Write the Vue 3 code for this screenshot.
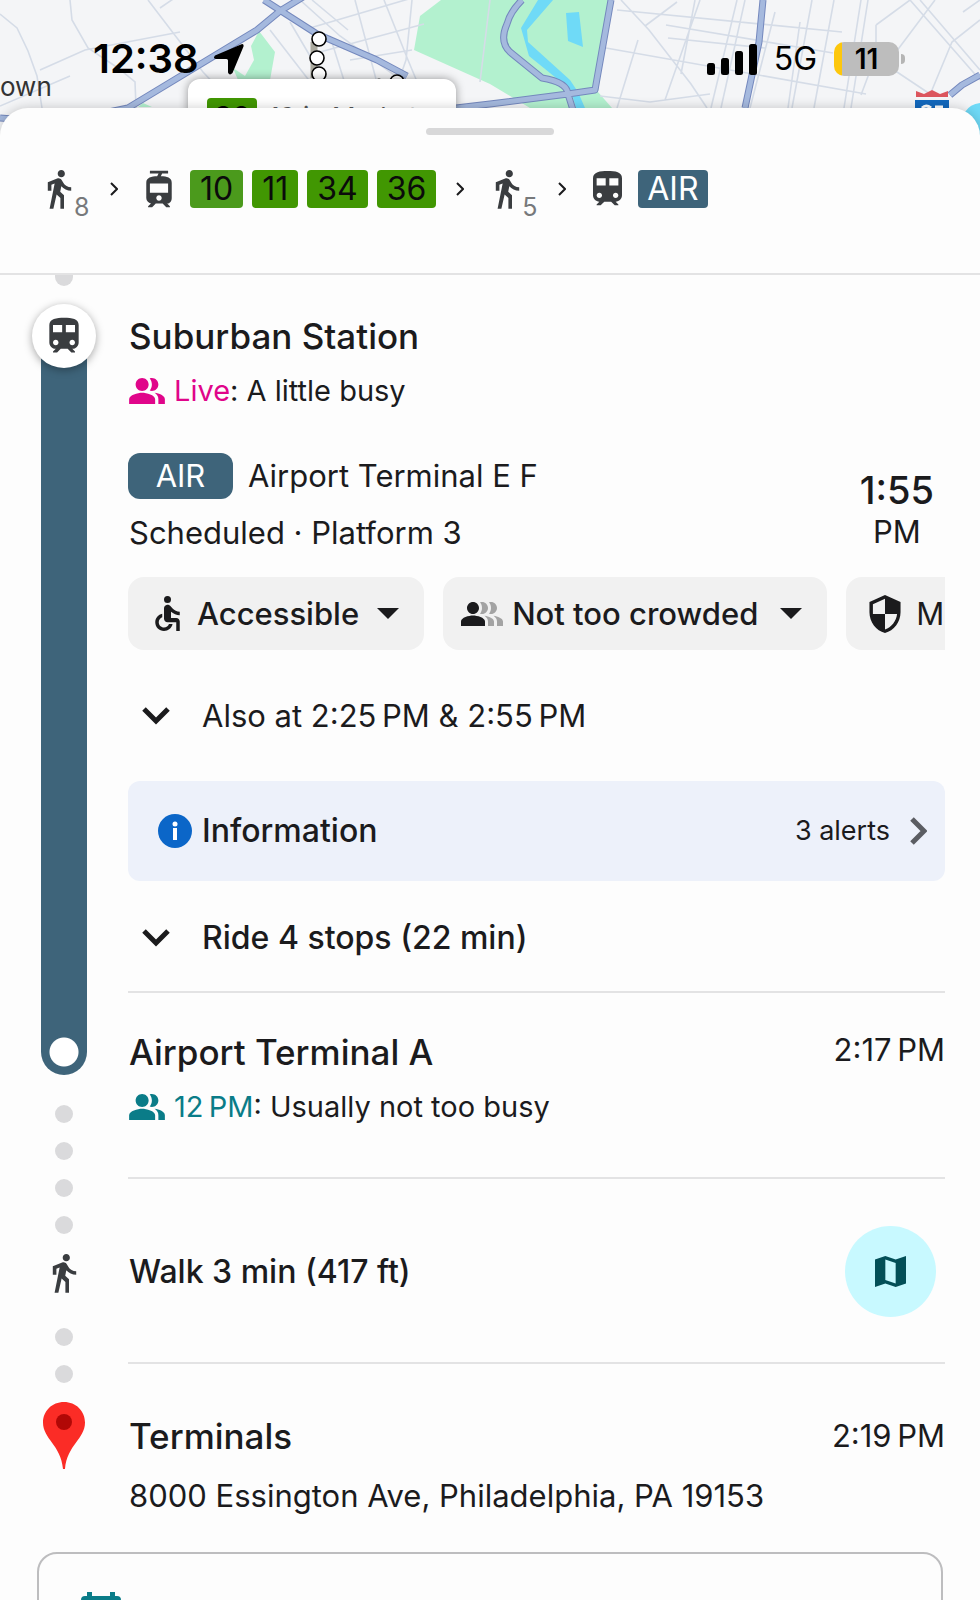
<script setup>
import { ref } from 'vue'

const paths = {
  walk: 'M13.5 5.5c1.1 0 2-.9 2-2s-.9-2-2-2-2 .9-2 2 .9 2 2 2zM9.8 8.9L7 23h2.1l1.8-8 2.1 2v6h2v-7.5l-2.1-2 .6-3C14.8 12 16.8 13 19 13v-2c-1.9 0-3.5-1-4.3-2.4l-1-1.6c-.4-.6-1-1-1.7-1-.3 0-.5.1-.8.1L6 8.3V13h2V9.6l1.8-.7z',
  train: 'M12 2c-4 0-8 .5-8 4v9.5C4 17.43 5.57 19 7.5 19L6 20.5v.5h2.23l2-2H14l2 2h2v-.5L16.5 19c1.93 0 3.5-1.57 3.5-3.5V6c0-3.5-3.58-4-8-4zM7.5 17c-.83 0-1.5-.67-1.5-1.5S6.67 14 7.5 14s1.5.67 1.5 1.5S8.33 17 7.5 17zm3.5-7H6V6h5v4zm2 0V6h5v4h-5zm3.5 7c-.83 0-1.5-.67-1.5-1.5s.67-1.5 1.5-1.5 1.5.67 1.5 1.5-.67 1.5-1.5 1.5z',
  tram: 'M19 16.94V8.5c0-2.79-2.61-3.4-6.01-3.49l.76-1.51H17V2H7v1.5h4.75l-.76 1.52C7.86 5.11 5 5.73 5 8.5v8.44c0 1.45 1.19 2.66 2.59 2.97L6 21.5v.5h2.23l2-2H14l2 2h2v-.5L16.5 20h-.08c1.69 0 2.58-1.37 2.58-3.06zm-7 1.56c-.83 0-1.5-.67-1.5-1.5s.67-1.5 1.5-1.5 1.5.67 1.5 1.5-.67 1.5-1.5 1.5zm5-4.5H7V9h10v5z',
  person: 'M9 12c2.21 0 4-1.79 4-4s-1.79-4-4-4-4 1.79-4 4 1.79 4 4 4zm0 1c-2.67 0-8 1.34-8 4v3h16v-3c0-2.66-5.33-4-8-4z',
  behind: 'M16.67 13.13C18.04 14.06 19 15.32 19 17v3h4v-3c0-2.18-3.57-3.47-6.33-3.87zM15 12c2.21 0 4-1.79 4-4s-1.79-4-4-4c-.47 0-.91.1-1.33.24C14.5 5.27 15 6.58 15 8s-.5 2.73-1.33 3.76c.42.14.86.24 1.33.24z',
  wheelchair: 'M12 2a2 2 0 1 0 0 4 2 2 0 0 0 0-4zM19 13v-2c-1.54.02-3.09-.75-4.07-1.83l-1.29-1.43c-.17-.19-.38-.34-.61-.45-.01 0-.01-.01-.02-.01H13c-.35-.2-.75-.3-1.19-.26C10.76 7.11 10 8.04 10 9.09V15c0 1.1.9 2 2 2h5v5h2v-5.5c0-1.1-.9-2-2-2h-3v-3.45c1.29 1.07 3.25 1.94 5 1.95zm-6.17 5c-.41 1.16-1.52 2-2.83 2-1.66 0-3-1.34-3-3 0-1.31.84-2.41 2-2.83V12.1c-2.28.46-4 2.48-4 4.9 0 2.76 2.24 5 5 5 2.42 0 4.44-1.72 4.9-4h-2.07z',
  shield: 'M12 1L3 5v6c0 5.55 3.84 10.74 9 12 5.16-1.26 9-6.45 9-12V5l-9-4zm0 10.99h7c-.53 4.12-3.28 7.79-7 8.94V12H5V6.3l7-3.11v8.8z',
  map: 'M21 3l-6 2.1L9 3 3 5v16l6-2.1 6 2.1 6-2V3zM15 19l-6-2.11V5l6 2.11V19z'
}

const tramLines = ['10', '11', '34', '36']
const otherTimes = ref(false)
const stopsOpen = ref(false)
</script>

<template>
  <div class="app">
    <header class="map">
      <svg class="map-art" viewBox="0 0 980 136" preserveAspectRatio="xMidYMin slice" aria-hidden="true">
        <rect width="980" height="136" fill="#f4f5f7" />
        <g fill="#b3f1cf">
          <path d="M441 0H611L598 92 612 108H530L490 84 414 50 420 16z" />
          <path d="M259 31L275 52 270 80H238L233 68 245 76 254 60 251 46zM143 103l9 4h-14z" />
        </g>
        <g fill="#6fdaf7">
          <path d="M538 0h15l-26 30 1 12 42 38 8 12 7 16h-9l-5-18-42-34-8-28z" />
          <path d="M566 13l13-1 4 35-15-6zM965 112q5-8 15-9v33h-9z" />
        </g>
        <g fill="none" stroke="#d5dce7" stroke-width="1.6">
          <path d="M0 14L17 28 28 51 37 76 42 108M70 0l2 20 16 28 30 20 17 14 2 50M40 70l45-20 95-18M0 106l70-30M148 0l55 72 34 36M160 8l35-24M270 30l48 62M290 22l50 85M330 36l22 70M300 0l40 36 75 54M312 0l36 30M355 0l26 98M384 0l24 60 20 48M310 28l102-30M320 52l104-28M350 60l62-10M412 0l-6 60-14 40" />
          <path d="M490 0l-10 82M617 10l225 22M606 48l260 46M645 26l32-24M638 40L617 108M666 25l167 28M668 38l97 10M700 0l-35 100M695 0l-14 74M737 0l-26 108M745 0l-24 108M775 12l-25 96M812 0l-20 108M800 22l-12 86M834 0l-20 108M861 0l-17 108M868 0l-17 108M876 25v30l-15 40M876 25l34-25M910 0l70 80M920 0l60 70M980 20l-28 22-20 48M885 64l45 30M890 60l45-60M600 96l50 6 60-8M621 0l28 30 42 54 16 24M963 12l17-12" />
        </g>
        <g fill="none" stroke-linejoin="round">
          <path d="M0 118q60 6 128-10L257 30l23-19L303-3M264 0l53 34 60 26 30 16M456 108l34-4 78-10 27-4L611 0M522 0q-12 12-15 24-8 18 3 28l32 26q25 4 26 16l5 16M763 0l-4 42-14 66M950 95l12-10 18-10" stroke="#7488bd" stroke-width="7" />
          <path d="M0 118q60 6 128-10L257 30l23-19L303-3M264 0l53 34 60 26 30 16M456 108l34-4 78-10 27-4L611 0M522 0q-12 12-15 24-8 18 3 28l32 26q25 4 26 16l5 16M763 0l-4 42-14 66M950 95l12-10 18-10" stroke="#a5b9de" stroke-width="5" />
        </g>
        <path d="M314 42v36" stroke="#aaa99e" stroke-width="7" />
        <g fill="#fff" stroke="#000" stroke-width="1.6">
          <circle cx="319" cy="39" r="7" /><circle cx="317" cy="58" r="7" /><circle cx="319" cy="74" r="7" /><circle cx="397" cy="82" r="7" />
        </g>
        <path d="M375 80q4-3 8 0z" />
        <path d="M916 91l8 3 8-4 8 4 8-3v6h-32z" fill="#dc555d" />
        <path d="M915 100h34v10h-34z" fill="#1268bd" />
        <path d="M922 108q4-4 9 0M935 107h8" stroke="#fff" stroke-width="3" fill="none" />
      </svg>
      <span class="town">own</span>
      <div class="callout"><b>36</b><span>19 in Market</span></div>
      <div class="status">
        <time class="clock">12:38</time>
        <svg class="arrow" viewBox="0 0 32 32" aria-hidden="true"><path d="M28.5 1.2Q31 .5 30.5 3.500L19.500 30Q16.500 33 15 29.500V17.500Q15 16 13.500 16H3Q-.5 15.500 2 12.500z" /></svg>
        <span class="grow"></span>
        <svg class="signal" viewBox="0 0 50 31" aria-hidden="true"><rect y="19" width="8" height="12" rx="2.500" /><rect x="14" y="14" width="8" height="17" rx="2.500" /><rect x="28" y="7" width="8" height="24" rx="2.500" /><rect x="42" width="8" height="31" rx="2.500" /></svg>
        <span class="network">5G</span>
        <span class="battery">11</span>
        <span class="nub"></span>
      </div>
    </header>

    <main class="sheet">
      <div class="top">
        <button class="handle" aria-label="Resize sheet"></button>
        <div class="summary">
          <svg class="icon walk" viewBox="5 1 15 22"><path :d="paths.walk" /></svg><sub>8</sub>
          <svg class="next" viewBox="0 0 8 14"><path d="M1 1l6 6-6 6" /></svg>
          <svg class="icon tram" viewBox="5 1 14 22"><path :d="paths.tram" /></svg>
          <span class="lines"><span v-for="l in tramLines" :key="l" class="line">{{ l }}</span></span>
          <svg class="next" viewBox="0 0 8 14"><path d="M1 1l6 6-6 6" /></svg>
          <svg class="icon walk second" viewBox="5 1 15 22"><path :d="paths.walk" /></svg><sub>5</sub>
          <svg class="next" viewBox="0 0 8 14"><path d="M1 1l6 6-6 6" /></svg>
          <svg class="icon train" viewBox="4 1 16 22"><path :d="paths.train" /></svg>
          <span class="line rail-line">AIR</span>
        </div>
      </div>

      <div class="steps">
        <section class="step">
          <div class="rail">
            <i class="half-dot"></i>
            <span class="station"><svg viewBox="0 0 24 24"><path :d="paths.train" /></svg></span>
            <i class="bar"></i>
          </div>
          <div class="body board">
            <h2>Suburban Station</h2>
            <p class="busy live">
              <svg viewBox="1 4 22 16"><path :d="paths.person" /><path :d="paths.behind" /></svg>
              <span><b>Live</b>: A little busy</span>
            </p>
            <div class="departure">
              <div>
                <p class="headsign"><span class="badge">AIR</span>Airport Terminal E F</p>
                <p class="platform">Scheduled · Platform 3</p>
              </div>
              <time class="leave"><b>1:55</b>PM</time>
            </div>
            <div class="filters">
              <button class="filter">
                <svg class="chair" viewBox="5 2 14 20"><path :d="paths.wheelchair" /></svg>Accessible
                <svg class="caret" viewBox="0 0 22 11"><path d="M0 0h22L11 11z" /></svg>
              </button>
              <button class="filter crowd">
                <svg class="crowd-icon" viewBox="1 4 28 16"><path :d="paths.person" /><g fill="#a3a3a3"><path :d="paths.behind" /><path :d="paths.behind" transform="translate(6 0)" /></g></svg>Not too crowded
                <svg class="caret" viewBox="0 0 22 11"><path d="M0 0h22L11 11z" /></svg>
              </button>
              <button class="filter safety">
                <svg class="shield" viewBox="3 1 18 22"><path :d="paths.shield" /></svg>Mostly safe
              </button>
            </div>
            <button class="expand" :aria-expanded="otherTimes" @click="otherTimes = !otherTimes">
              <svg viewBox="0 0 28 18"><path d="M2 2l12 12L26 2" /></svg>Also at 2:25&#8239;PM &amp; 2:55&#8239;PM
            </button>
            <button class="info">
              <svg class="info-icon" viewBox="0 0 34 34"><circle cx="17" cy="17" r="17" fill="#0b66c8" /><circle cx="17" cy="10" r="2.500" fill="#fff" /><rect x="15" y="14" width="4" height="12" fill="#fff" /></svg>
              <span class="medium">Information</span>
              <span class="alerts">3 alerts</span>
              <svg class="go" viewBox="0 0 17 28"><path d="M2 2l12 12L2 26" /></svg>
            </button>
            <button class="expand medium ride" :aria-expanded="stopsOpen" @click="stopsOpen = !stopsOpen">
              <svg viewBox="0 0 28 18"><path d="M2 2l12 12L26 2" /></svg>Ride 4 stops (22 min)
            </button>
          </div>
        </section>

        <section class="step">
          <div class="rail">
            <i class="bar-end"></i>
            <i class="dot"></i>
            <i class="dot"></i>
          </div>
          <div class="body alight">
            <div class="heading"><h2>Airport Terminal A</h2><time>2:17&#8239;PM</time></div>
            <p class="busy usual">
              <svg viewBox="1 4 22 16"><path :d="paths.person" /><path :d="paths.behind" /></svg>
              <span><b>12&#8239;PM</b>: Usually not too busy</span>
            </p>
          </div>
        </section>

        <section class="step">
          <div class="rail">
            <i class="dot"></i>
            <i class="dot"></i>
            <svg class="walker" viewBox="5 1 15 22"><path :d="paths.walk" /></svg>
            <i class="dot"></i>
          </div>
          <div class="body stroll">
            <p class="medium">Walk 3 min (417 ft)</p>
            <button class="preview" aria-label="Show walk on map"><svg viewBox="3 3 18 18"><path :d="paths.map" /></svg></button>
          </div>
        </section>

        <section class="step">
          <div class="rail">
            <i class="dot"></i>
            <svg class="pin" viewBox="0 0 42 68"><path d="M21 0C9 0 0 9 0 20.500 0 37 18 43 20 67h2C24 43 42 37 42 20.500 42 9 33 0 21 0z" fill="#fb2c26" /><circle cx="21" cy="20" r="8" fill="#b10806" /></svg>
          </div>
          <div class="body arrive">
            <div class="heading"><h2>Terminals</h2><time>2:19&#8239;PM</time></div>
            <p class="address">8000 Essington Ave, Philadelphia, PA 19153</p>
          </div>
        </section>

        <div class="card">
          <svg viewBox="0 0 40 44" fill="#0a7c88"><path d="M6 0h5v4h18V0h5v4h2q4 0 4 4v32q0 4-4 4H4q-4 0-4-4V8q0-4 4-4h2zM5 15v20h30V15z" /></svg>
        </div>
      </div>
    </main>
  </div>
</template>

<style>
body {
  margin: 0;
  background: #fdfdfd;
}
</style>

<style scoped>
.app {
  display: flex;
  flex-direction: column;
  height: 100vh;
  overflow: hidden;
  font: 400 31px/40px Inter, "Liberation Sans", sans-serif;
  color: #1b1b1d;
}
h2, p { margin: 0; }
h2 { font-size: 35px; line-height: 44px; font-weight: 500; }
button { font: inherit; color: inherit; border: 0; padding: 0; background: none; text-align: left; cursor: pointer; }
svg { display: block; flex: none; fill: #1b1b1d; }
.medium { font-size: 32px; font-weight: 500; }

.map { position: relative; flex: none; height: 108px; }
.map-art { position: absolute; top: 0; left: 0; width: 100%; height: 136px; }
.town { position: absolute; left: 0; top: 71px; font-size: 26px; line-height: 32px; color: #333; }
.callout {
  position: absolute;
  left: 188px;
  top: 79px;
  display: flex;
  align-items: flex-start;
  gap: 12px;
  box-sizing: border-box;
  width: 268px;
  height: 57px;
  padding: 19px;
  border-radius: 12px;
  background: #fff;
  box-shadow: 0 0 10px rgba(0, 0, 0, 0.4);
  font-size: 26px;
  line-height: 38px;
  white-space: nowrap;
  color: #55575a;
}
.callout b { width: 50px; border-radius: 4px; background: #419702; color: #000; text-align: center; font-weight: 600; font-size: 28px; }
.status { position: relative; display: flex; align-items: center; height: 118px; padding: 0 75px 0 93px; color: #000; }
.status svg { fill: #000; }
.clock { font-size: 40px; font-weight: 600; }
.arrow { width: 32px; height: 32px; margin-left: 14px; }
.grow { flex: 1; }
.signal { width: 50px; height: 31px; }
.network { margin: 0 17px; font-size: 32px; }
.battery {
  width: 65px;
  border-radius: 10px;
  background: linear-gradient(90deg, #fdc70c 8px, #bdbdbd 8px);
  font-size: 28px;
  line-height: 34px;
  font-weight: 600;
  text-align: center;
}
.nub { width: 4px; height: 10px; margin-left: 2px; border-radius: 0 4px 4px 0; background: #b5b5b5; }

.sheet {
  position: relative;
  display: flex;
  flex-direction: column;
  flex: 1;
  min-height: 0;
  border-radius: 28px 28px 0 0;
  background: #fdfdfd;
  box-shadow: 0 0 12px rgba(0, 0, 0, 0.2);
}
.top { flex: none; box-sizing: border-box; height: 167px; padding-top: 20px; border-bottom: 2px solid #e3e3e4; }
.handle { display: block; width: 128px; height: 7px; margin: 0 auto; border-radius: 4px; background: #d8d8d9; }
.summary { display: flex; align-items: center; height: 38px; margin: 35px 35px 0 46px; }
.icon { height: 40px; fill: #3a3d40; }
.icon.walk { width: 27px; }
.icon.walk.second { margin-left: 30px; }
.icon.tram { width: 26px; margin-left: 28px; }
.icon.train { width: 29px; margin-left: 27px; }
.summary sub { align-self: flex-end; width: 16px; margin-left: 1px; font-size: 25px; line-height: 18px; vertical-align: baseline; height: 10px; color: #77797b; }
.next { width: 8px; height: 14px; margin-left: 20px; fill: none; stroke: #1b1b1d; stroke-width: 2; }
.lines { display: flex; gap: 9px; margin-left: 18px; }
.line { padding: 0 10px; border-radius: 4px; background: #419702; color: #0b0b0b; font-size: 32px; line-height: 38px; }
.line:first-child { background: #4b9a1c; }
.line.rail-line { margin-left: 16px; padding: 0 9px; background: #3e647a; color: #fff; }

.steps { flex: 1; min-height: 0; overflow: hidden auto; scrollbar-width: none; }
.step { display: grid; grid-template-columns: 128px minmax(0, 1fr); padding-right: 35px; }
.rail { display: flex; flex-direction: column; align-items: center; }
.body { border-bottom: 2px solid #e3e3e4; }
.dot { width: 18px; height: 18px; margin-bottom: 19px; border-radius: 50%; background: #dadadc; }
.half-dot { width: 18px; height: 11px; border-radius: 0 0 9px 9px; background: #dadadc; }
.station {
  z-index: 1;
  display: grid;
  place-items: center;
  width: 64px;
  height: 64px;
  margin: 18px 0 -32px;
  border-radius: 50%;
  background: #fff;
  box-shadow: 0 2px 8px rgba(0, 0, 0, 0.35);
}
.station svg { width: 44px; height: 44px; fill: #3a3d40; }
.bar { flex: 1; width: 46px; background: #3e647a; }
.bar-end {
  width: 46px;
  height: 82px;
  margin-bottom: 30px;
  border-radius: 0 0 23px 23px;
  background: radial-gradient(circle at 23px 59px, #fff 14px, #3e647a 15px);
}

.board { padding-top: 39px; }
.busy { display: flex; align-items: center; gap: 9px; font-size: 29px; }
.busy svg { width: 36px; height: 26px; }
.busy b { font-weight: 400; }
.live { margin-top: 13px; }
.live svg { fill: #e0058a; }
.live b { color: #e0058a; }
.usual { margin-top: 13px; }
.usual svg, .usual b { fill: #0a7c88; color: #0a7c88; }
.live, .usual, h2, .platform, .stroll p, .address { padding-left: 1px; }
.departure { display: flex; justify-content: space-between; margin-top: 41px; }
.headsign { display: flex; align-items: center; gap: 15px; height: 47px; }
.badge { width: 105px; border-radius: 12px; background: #3e647a; color: #fff; line-height: 46px; text-align: center; }
.platform { margin-top: 14px; }
.leave { display: flex; flex-direction: column; align-items: center; margin: 16px 11px 0 0; }
.leave b { font-size: 38px; line-height: 44px; font-weight: 500; }
.filters { display: flex; gap: 19px; margin-top: 24px; overflow: hidden; }
.filter { display: flex; flex: none; align-items: center; height: 73px; padding: 0 25px 0 27px; border-radius: 16px; background: #f1f1f1; font-weight: 500; white-space: nowrap; }
.filter.crowd { padding-left: 18px; }
.filter.safety { padding-left: 23px; font-weight: 400; }
.chair { width: 25px; height: 35px; margin-right: 17px; }
.crowd-icon { width: 42px; height: 24px; margin-right: 9px; }
.shield { width: 32px; height: 38px; margin-right: 15px; }
.caret { width: 22px; height: 11px; margin-left: 18px; }
.crowd .caret { margin-left: 22px; }
.expand { display: flex; align-items: center; gap: 32px; width: 100%; height: 60px; margin-top: 36px; padding-left: 14px; white-space: nowrap; }
.expand svg { width: 28px; height: 18px; fill: none; stroke: #1b1b1d; stroke-width: 5; }
.info { display: flex; align-items: center; box-sizing: border-box; width: 100%; height: 100px; margin-top: 35px; padding: 0 18px 0 30px; border-radius: 12px; background: #edf1fa; }
.info-icon { width: 34px; height: 34px; margin-right: 10px; }
.alerts { margin-left: auto; font-size: 27px; }
.go { width: 17px; height: 28px; margin-left: 20px; fill: none; stroke: #5b5d62; stroke-width: 5; }
.ride { margin: 27px 0 23px; }

.heading { display: flex; justify-content: space-between; align-items: center; }
.alight { box-sizing: border-box; height: 186px; padding-top: 37px; }
.alight .heading { align-items: flex-start; }
.walker { width: 27px; height: 40px; margin: 0 0 35px; }
.walker { fill: #3a3d40; }
.stroll { box-sizing: border-box; height: 185px; display: flex; align-items: center; justify-content: space-between; padding: 2px 9px 0 0; }
.preview { display: grid; place-items: center; width: 91px; height: 91px; border-radius: 50%; background: #c8f9ff; }
.preview svg { width: 31px; height: 31px; fill: #034f57; }
.pin { width: 42px; height: 68px; }
.arrive { border: 0; padding: 49px 0 36px; }
.address { margin-top: 18px; }
.card { height: 140px; margin: 0 37px; padding: 38px 42px; border: 2px solid #bdbdbf; border-radius: 20px; box-sizing: border-box; }
.card svg { width: 40px; height: 44px; fill: #0a7c88; }
</style>
